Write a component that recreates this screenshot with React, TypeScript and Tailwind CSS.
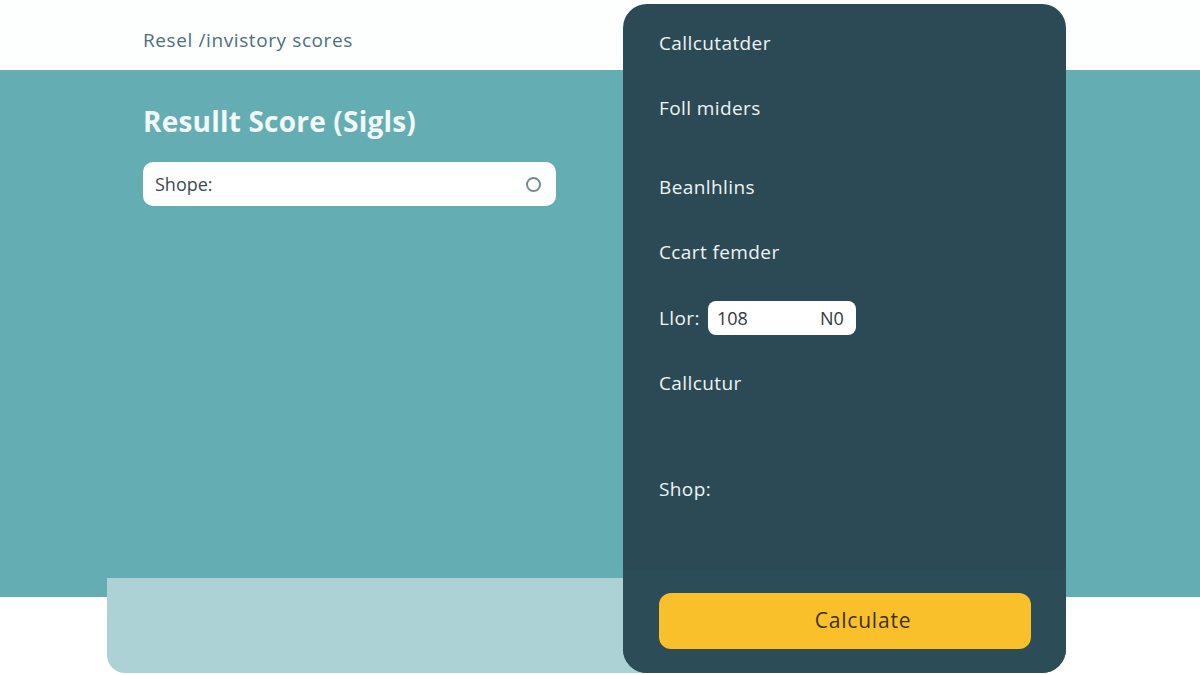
import React from "react";

const font = { fontFamily: '"Open Sans", "Lato", sans-serif' };

function PanelLabel({ text, className }: { text: string; className?: string }) {
  return <p className={"text-[19px] leading-[28px] font-medium tracking-[0.4px] text-[#eef4f4] " + (className ?? "")}>{text}</p>;
}

export default function App() {
  return (
    <div className="relative w-[1200px] h-[675px] overflow-hidden bg-white" style={font}>
      {/* top band */}
      <div className="h-[70px] pl-[143px] pt-[27px] bg-[#fdfefe]">
        <p className="text-[19px] leading-[26px] text-[#4d707a] tracking-[0.6px]">Resel /invistory scores</p>
      </div>

      {/* teal band */}
      <div className="h-[527px] bg-[#64adb2] pl-[143px] pt-[33px]">
        <h1 className="text-[28px] leading-[36px] font-bold tracking-[0.2px] text-[#f2f9f9]">Resullt Score (Sigls)</h1>
        <div className="mt-[23px] w-[413px] h-[44px] rounded-[10px] bg-white flex items-center justify-between pl-[12px] pr-[15px]">
          <span className="text-[18px] text-[#3b4a50]">Shope:</span>
          <span className="w-[15px] h-[15px] rounded-full border-2 border-[#6f8d91]" />
        </div>
      </div>

      {/* light card */}
      <div className="-mt-[19px] ml-[107px] w-[540px] h-[95px] rounded-bl-[18px] bg-[#acd2d5]" />

      {/* dark calculator panel */}
      <div className="absolute left-[623px] top-[4px] w-[443px] h-[669px] rounded-[24px] bg-[#2b4a55] overflow-hidden flex flex-col">
        <div className="flex flex-col pl-[36px] pt-[25px]">
          <PanelLabel text="Callcutatder" />
          <PanelLabel text="Foll miders" className="mt-[37px]" />
          <PanelLabel text="Beanlhlins" className="mt-[51px]" />
          <PanelLabel text="Ccart femder" className="mt-[37px]" />
          <div className="mt-[35px] flex items-center gap-[8px]">
            <span className="text-[19px] leading-[28px] font-medium tracking-[0.4px] text-[#eef4f4]">Llor:</span>
            <div className="w-[148px] h-[34px] rounded-[8px] bg-white flex items-center justify-between pl-[9px] pr-[12px] text-[18px] text-[#2e3a3e]">
              <span>108</span>
              <span>N0</span>
            </div>
          </div>
          <PanelLabel text="Callcutur" className="mt-[34px]" />
          <PanelLabel text="Shop:" className="mt-[78px]" />
        </div>
        <div className="mt-auto h-[103px] bg-[#2c4c58] px-[36px] pt-[23px]">
          <button className="w-[372px] h-[56px] rounded-[12px] bg-[#f9c02c] pl-[36px] text-[21px] font-medium tracking-[0.8px] text-[#3b3312]">
            Calculate
          </button>
        </div>
      </div>
    </div>
  );
}
